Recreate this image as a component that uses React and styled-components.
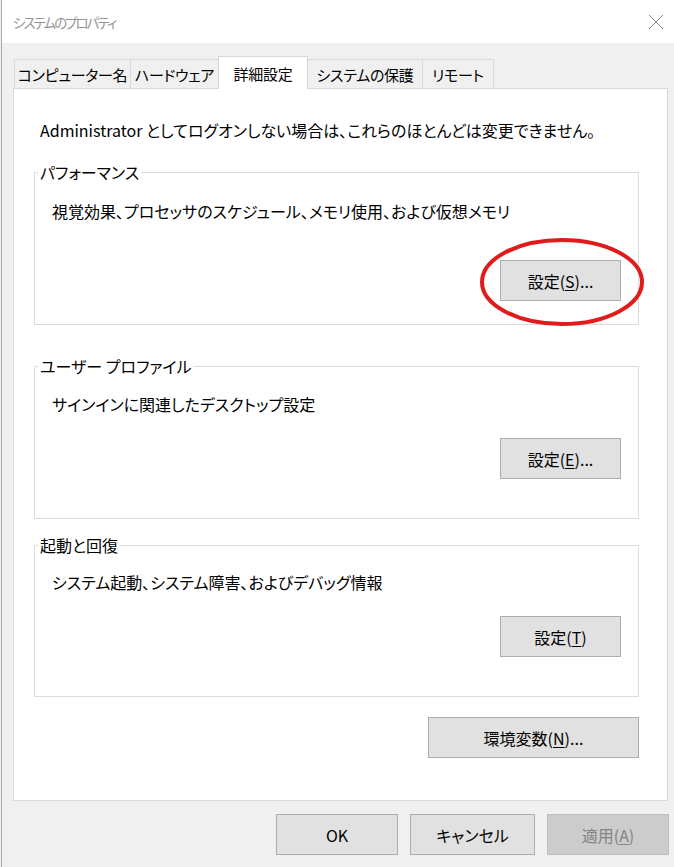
import React from 'react';
import styled, { createGlobalStyle } from 'styled-components';

const GlobalStyle = createGlobalStyle`
  html, body {
    margin: 0;
    padding: 0;
    background: #f0f0f0;
  }
  body {
    font-family: "Noto Sans CJK JP", "Noto Sans", sans-serif;
    font-size: 16px;
    font-feature-settings: "palt";
    color: #000;
  }
`;

const Window = styled.div`
  width: 673px;
  height: 867px;
  margin-left: 1px;
  border-left: 1px solid #a8a8a8;
  display: flex;
  flex-direction: column;
  overflow: hidden;
`;

const TitleBar = styled.div`
  height: 43px;
  flex-shrink: 0;
  background: #fff;
  display: flex;
  align-items: center;
  justify-content: space-between;
  padding: 0 11px 0 11px;
`;

const Title = styled.div`
  color: #949494;
  font-size: 13.5px;
  letter-spacing: -2px;
`;

const CloseIcon = styled.svg`
  width: 16px;
  height: 16px;
  stroke: #8c8c8c;
  stroke-width: 1;
`;

const Body = styled.div`
  flex: 1;
  background: #f0f0f0;
  padding: 13px 7px 0 11px;
  display: flex;
  flex-direction: column;
`;

const TabBar = styled.div`
  display: flex;
  align-items: flex-end;
  height: 32px;
  padding-left: 2px;
  position: relative;
  z-index: 1;
`;

const Tab = styled.div`
  width: ${(p) => p.$width}px;
  box-sizing: border-box;
  height: ${(p) => (p.$active ? '33px' : '29px')};
  margin-bottom: ${(p) => (p.$active ? '-1px' : '0')};
  margin-left: -1px;
  background: ${(p) => (p.$active ? '#fff' : '#f0f0f0')};
  border: 1px solid #d9d9d9;
  border-bottom: none;
  display: flex;
  align-items: center;
  justify-content: center;
  font-size: 15px;
  letter-spacing: -0.3px;
  white-space: nowrap;
`;

const Panel = styled.div`
  height: 711px;
  background: #fff;
  border: 1px solid #d9d9d9;
  padding: 0 28px 0 20px;
  display: flex;
  flex-direction: column;
`;

const Intro = styled.div`
  margin-top: 29px;
  padding-left: 6px;
  line-height: 24px;
`;

const Group = styled.fieldset`
  margin: ${(p) => p.$top}px 0 0 0;
  padding: 0 17px 0 17px;
  border: 1px solid #dcdcdc;
  height: ${(p) => p.$height}px;
  box-sizing: border-box;
  display: flex;
  flex-direction: column;
  min-width: 0;
`;

const Legend = styled.legend`
  margin-left: -14px;
  padding: 0 2px;
  line-height: 22px;
`;

const Description = styled.div`
  margin-top: ${(p) => p.$top}px;
  line-height: 24px;
`;

const ButtonWrap = styled.div`
  align-self: flex-end;
  margin-top: ${(p) => p.$top}px;
  position: relative;
`;

const Button = styled.button`
  width: ${(p) => p.$width || 121}px;
  height: 41px;
  background: ${(p) => (p.disabled ? '#cccccc' : '#e1e1e1')};
  border: 1px solid ${(p) => (p.disabled ? '#bfbfbf' : '#adadad')};
  color: ${(p) => (p.disabled ? '#838383' : '#000')};
  font-family: inherit;
  font-size: 16px;
  font-feature-settings: "palt";
  padding: 0;
  cursor: default;
`;

const Annotation = styled.svg`
  position: absolute;
  left: -22px;
  top: -24px;
  width: 170px;
  height: 92px;
  pointer-events: none;
`;

const EnvRow = styled.div`
  display: flex;
  justify-content: flex-end;
  margin-top: 20px;
`;

const Footer = styled.div`
  display: flex;
  justify-content: flex-end;
  gap: 12px;
  margin-top: 13px;
  margin-right: -1px;
`;

const Key = styled.u`
  text-underline-offset: 2px;
`;

const tabs = [
  { label: 'コンピューター名', width: 117 },
  { label: 'ハードウェア', width: 89 },
  { label: '詳細設定', width: 90, active: true },
  { label: 'システムの保護', width: 116 },
  { label: 'リモート', width: 72 },
];

const App = () => {
  return (
    <>
      <GlobalStyle />
      <Window>
        <TitleBar>
          <Title>システムのプロパティ</Title>
          <CloseIcon viewBox="0 0 16 16" fill="none">
            <path d="M1 1 L15 15 M15 1 L1 15" />
          </CloseIcon>
        </TitleBar>
        <Body>
          <TabBar>
            {tabs.map((t) => (
              <Tab key={t.label} $width={t.width} $active={t.active}>{t.label}</Tab>
            ))}
          </TabBar>
          <Panel>
            <Intro>Administrator としてログオンしない場合は、これらのほとんどは変更できません。</Intro>

            <Group $top={19} $height={164}>
              <Legend>パフォーマンス</Legend>
              <Description $top={16}>視覚効果、プロセッサのスケジュール、メモリ使用、および仮想メモリ</Description>
              <ButtonWrap $top={37}>
                <Button>設定(<Key>S</Key>)...</Button>
                <Annotation viewBox="0 0 170 92">
                  <ellipse cx="84" cy="46" rx="80" ry="42" fill="none" stroke="#e01b1b" strokeWidth="4" />
                </Annotation>
              </ButtonWrap>
            </Group>

            <Group $top={30} $height={164}>
              <Legend>ユーザー プロファイル</Legend>
              <Description $top={15}>サインインに関連したデスクトップ設定</Description>
              <ButtonWrap $top={22}>
                <Button>設定(<Key>E</Key>)...</Button>
              </ButtonWrap>
            </Group>

            <Group $top={15} $height={163}>
              <Legend>起動と回復</Legend>
              <Description $top={14}>システム起動、システム障害、およびデバッグ情報</Description>
              <ButtonWrap $top={22}>
                <Button>設定(<Key>T</Key>)</Button>
              </ButtonWrap>
            </Group>

            <EnvRow>
              <Button $width={211}>環境変数(<Key>N</Key>)...</Button>
            </EnvRow>
          </Panel>
          <Footer>
            <Button $width={122}>OK</Button>
            <Button $width={125}>キャンセル</Button>
            <Button $width={122} disabled>適用(<Key>A</Key>)</Button>
          </Footer>
        </Body>
      </Window>
    </>
  );
};

export default App;
